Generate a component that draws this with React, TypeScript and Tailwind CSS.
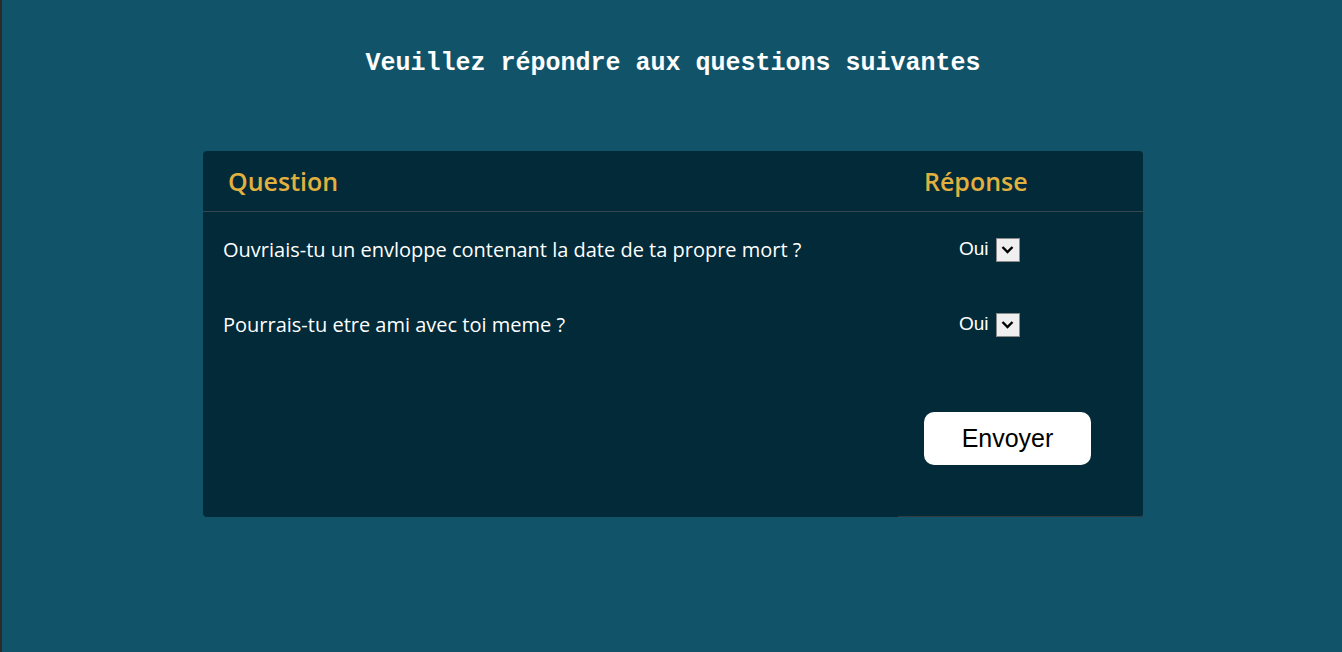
import React, { useState } from 'react';

const questions = [
  'Ouvriais-tu un envloppe contenant la date de ta propre mort ?',
  'Pourrais-tu etre ami avec toi meme ?',
];

const AnswerSelect: React.FC<{ value: string }> = ({ value }) => (
  <div className="flex items-center gap-[7px]">
    <span className="text-[19px] text-white font-['Liberation_Sans',Arial,sans-serif]">{value}</span>
    <span className="flex h-[24px] w-[24px] items-center justify-center border border-[#8a8a8a] bg-[#efefef]">
      <svg width="13" height="9" viewBox="0 0 13 9" fill="none">
        <path d="M1.5 2 L6.5 7 L11.5 2" stroke="#000" strokeWidth="2.4" />
      </svg>
    </span>
  </div>
);

export default function App() {
  const [answers] = useState(questions.map(() => 'Oui'));

  return (
    <div className="min-h-[652px] w-full border-l-2 border-[#2b2b2b] bg-[#11546a] pt-[48px] font-['Open_Sans',sans-serif]">
      <h1 className="text-center text-[25px] leading-[32px] font-bold text-white font-['Liberation_Mono','Courier_New',monospace] pl-[2px]">
        Veuillez répondre aux questions suivantes
      </h1>

      <div className="mx-auto mt-[71px] w-[940px] translate-x-[1px] rounded-[4px] bg-[#022a39]">
        <div className="flex h-[61px] items-center border-b border-[#36474e] pt-[2px] text-[25px] font-semibold text-[#e1b03f]">
          <div className="w-[721px] pl-[25px]">Question</div>
          <div className="flex-1">Réponse</div>
        </div>

        {questions.map((q, i) => (
          <div key={i} className="flex h-[75px] items-center text-[20px] text-white">
            <div className="w-[721px] pl-[20px]">{q}</div>
            <div className="flex-1 pl-[35px]">
              <AnswerSelect value={answers[i]} />
            </div>
          </div>
        ))}

        <div className="flex h-[155px]">
          <div className="w-[695px]" />
          <div className="flex-1 border-b border-[#2f3d43] pl-[26px] pt-[50px]">
            <button className="h-[53px] w-[167px] rounded-[10px] bg-white text-[25px] text-black font-['Liberation_Sans',Arial,sans-serif]">
              Envoyer
            </button>
          </div>
        </div>
      </div>
    </div>
  );
}
